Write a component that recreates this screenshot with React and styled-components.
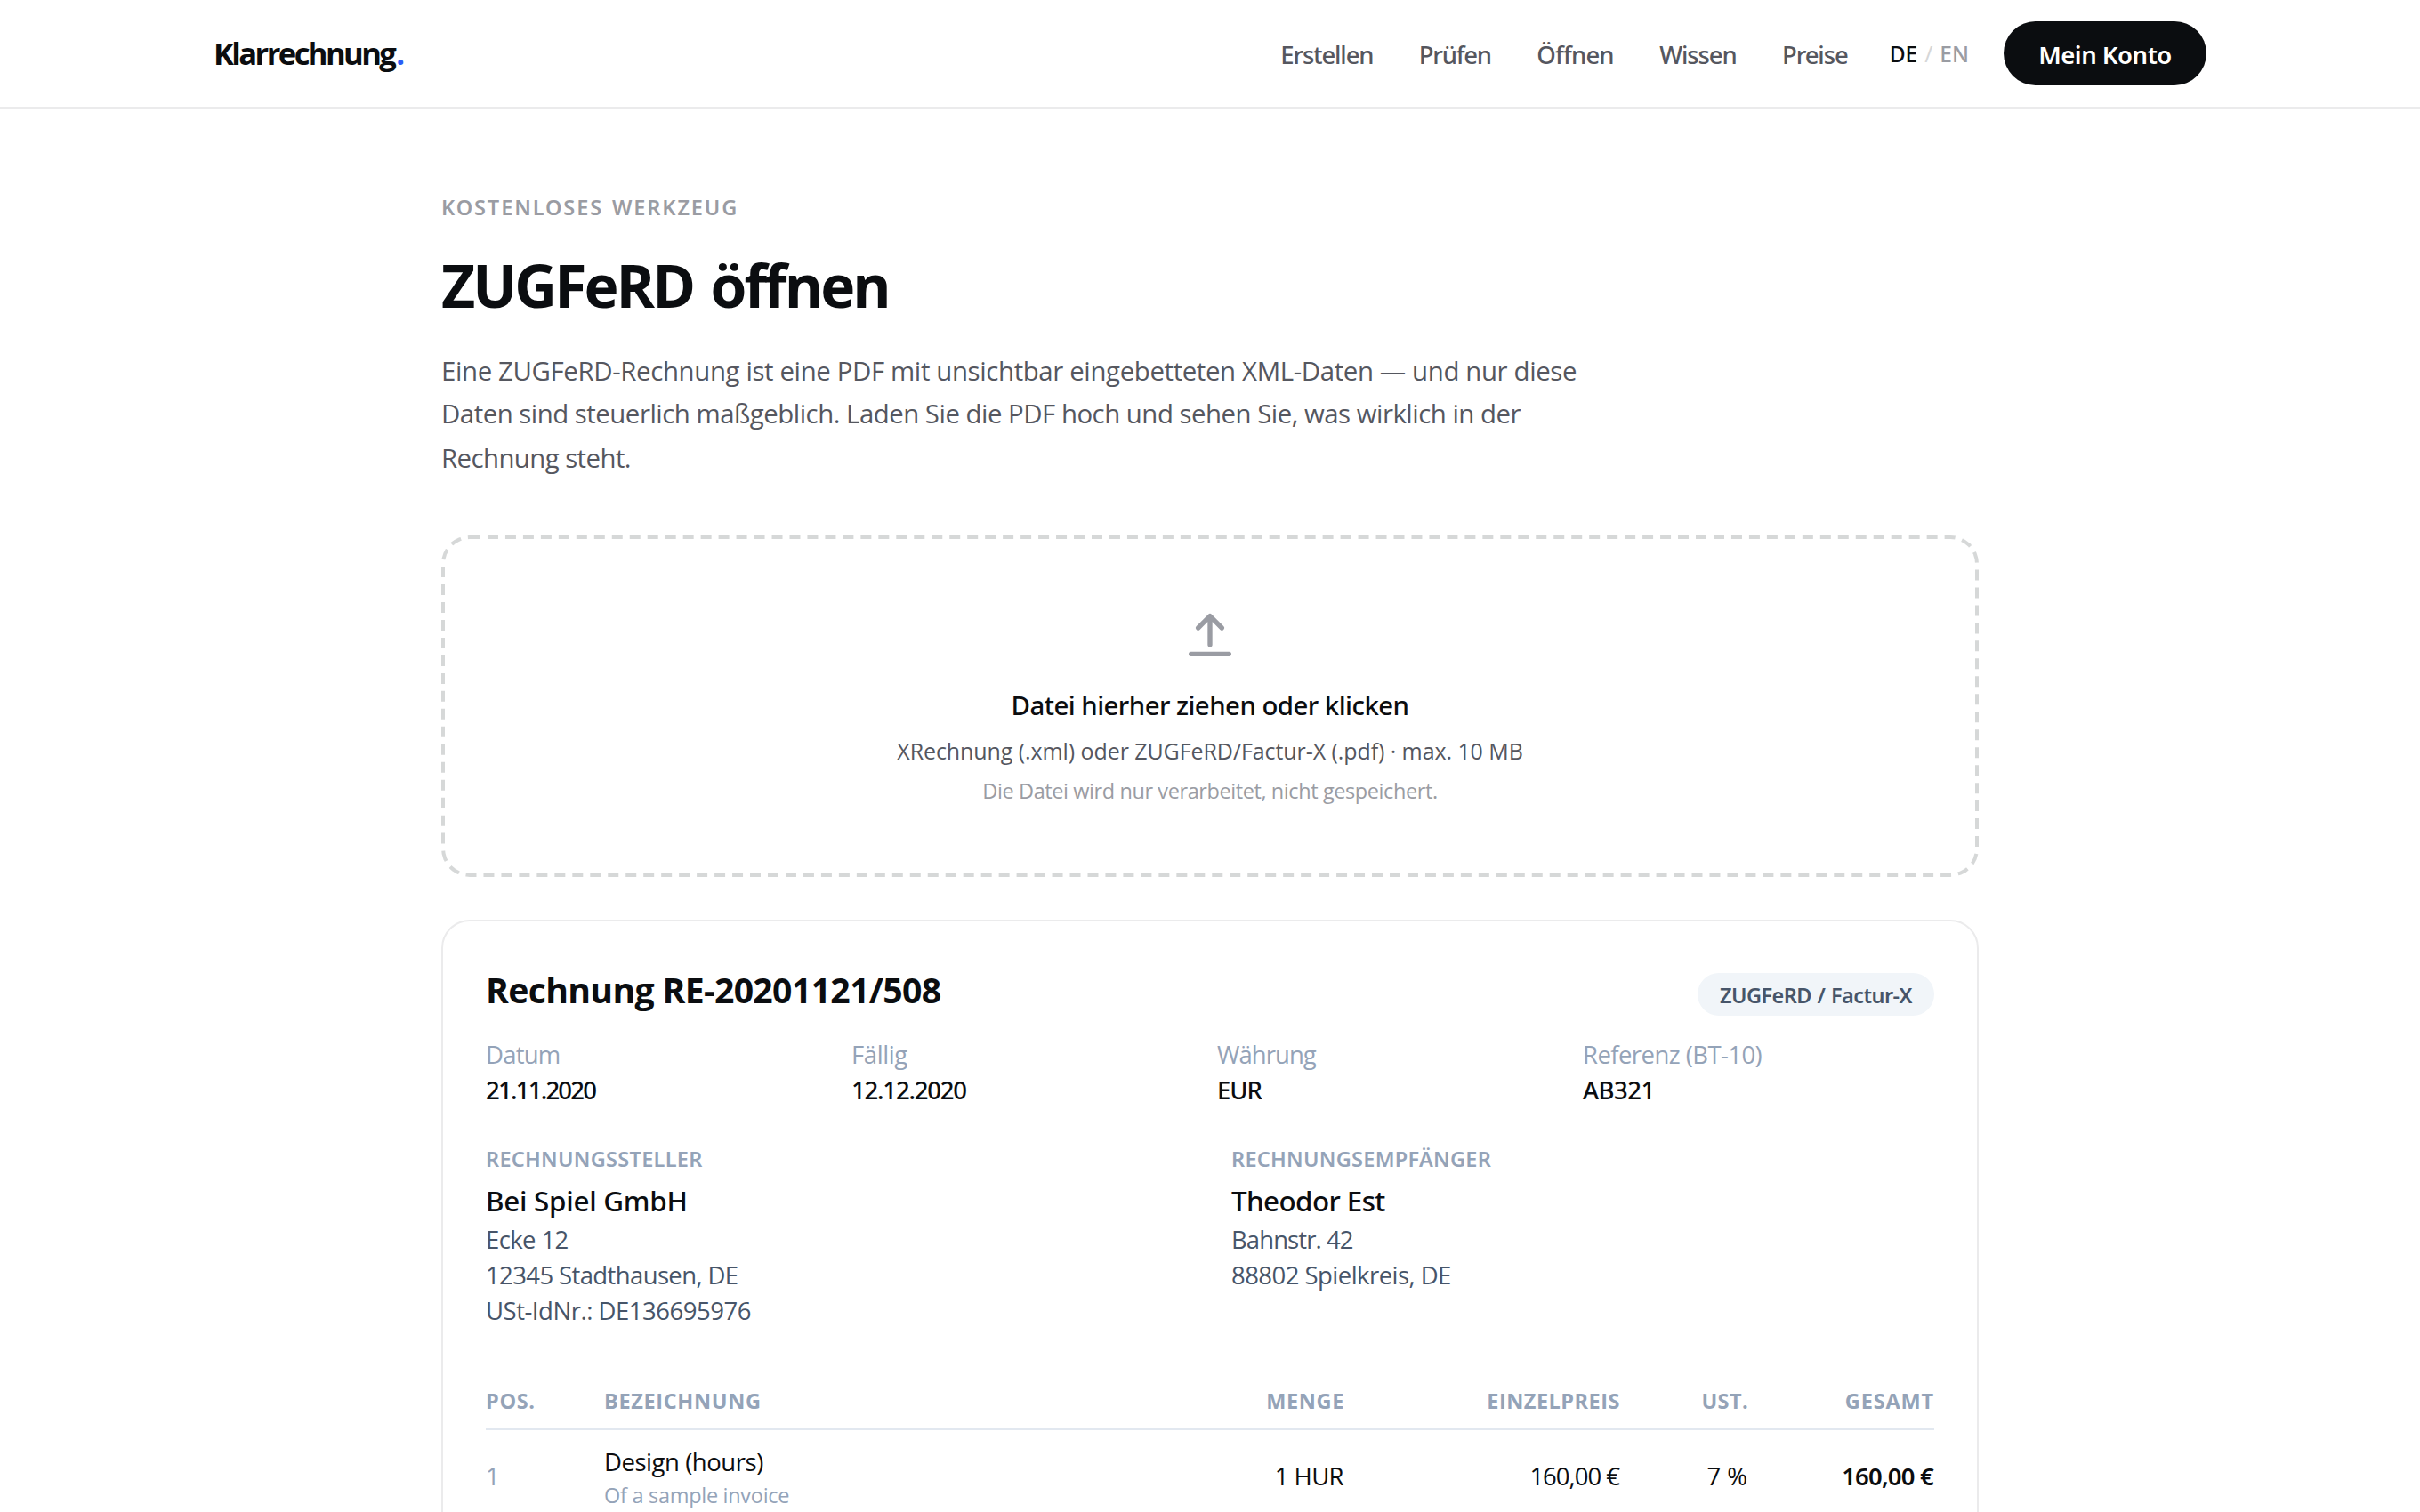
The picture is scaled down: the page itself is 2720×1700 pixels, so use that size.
import React from "react";
import styled, { createGlobalStyle } from "styled-components";

const BODY_FONT = '"Open Sans", "Noto Sans", sans-serif';
const MEDIUM_FONT = '"Noto Sans", "Open Sans", sans-serif';

const ink = "#0b0d10";
const grey = "#55575f";
const muted = "#9a9ca3";
const slate = "#94a3b8";
const slateDark = "#475569";

const Global = createGlobalStyle`
  *, *::before { box-sizing: border-box; }
  body { margin: 0; background: #fff; }
  h1, h2, p { margin: 0; }
`;

const Page = styled.div`
  width: 100%;
  height: 1700px;
  overflow: hidden;
  background: #fff;
  color: ${ink};
  font-family: ${BODY_FONT};
  font-size: 27.5px;
  white-space: nowrap;
`;

const Header = styled.header`
  height: 122px;
  border-bottom: 2px solid #ebebec;
`;

const HeaderInner = styled.div`
  width: 2240px;
  height: 120px;
  margin: 0 auto;
  display: flex;
  align-items: center;
  justify-content: space-between;
`;

const Logo = styled.div`
  padding-bottom: 2px;
  font-size: 34.6px;
  font-weight: 700;
  letter-spacing: -2.6px;
`;

const Dot = styled.span`
  margin-left: 2px;
  color: #2b5cf6;
`;

const Nav = styled.nav`
  display: flex;
  align-items: center;
`;

const Links = styled.div`
  display: flex;
  gap: 51.5px;
  margin-right: 47px;
  padding-top: 3px;
`;

const NavLink = styled.a`
  color: ${grey};
  font-family: ${MEDIUM_FONT};
  font-weight: 500;
  letter-spacing: ${(p) => p.$k}px;
`;

const Langs = styled.div`
  display: flex;
  gap: 8px;
  margin-right: 39px;
  padding-top: 1px;
  font-size: 24.5px;
  font-family: ${MEDIUM_FONT};
  font-weight: 500;
`;

const Lang = styled.span`
  color: ${(p) => (p.$active ? ink : muted)};
`;

const LangSlash = styled.span`
  color: #d6d7d8;
  font-weight: 400;
`;

const AccountButton = styled.button`
  width: 228px;
  height: 72px;
  padding: 3px 0 0;
  border: 0;
  border-radius: 36px;
  background: ${ink};
  color: #fff;
  font: 600 27.5px ${MEDIUM_FONT};
  letter-spacing: -0.5px;
`;

const Main = styled.main`
  width: 1728px;
  margin: 0 auto;
  padding-top: 93px;
`;

const Eyebrow = styled.p`
  color: ${muted};
  font: 600 23.5px/36px ${MEDIUM_FONT};
  letter-spacing: 1.9px;
  word-spacing: 2px;
`;

const Title = styled.h1`
  margin-top: 32px;
  font-size: 66px;
  line-height: 74px;
  font-weight: 700;
  letter-spacing: -2.9px;
  word-spacing: 5px;
`;

const Lead = styled.p`
  margin-top: 36px;
  color: ${grey};
  font-size: 29.4px;
`;

const Line = styled.span`
  display: block;
  line-height: ${(p) => p.$h}px;
  letter-spacing: ${(p) => p.$k}px;
`;

const DropZone = styled.section`
  position: relative;
  height: 384px;
  margin-top: 61px;
  padding-top: 80px;
  display: flex;
  flex-direction: column;
  align-items: center;

  &::before {
    content: "";
    position: absolute;
    top: 0;
    left: 0;
    width: 50%;
    height: 50%;
    border: 2px dashed #d6d8d8;
    border-radius: 16px;
    transform: scale(2);
    transform-origin: 0 0;
  }
`;

const DropTitle = styled.p`
  margin-top: 25px;
  font: 500 29.4px/44px ${MEDIUM_FONT};
  letter-spacing: -0.54px;
`;

const DropFormats = styled.p`
  margin-top: 10px;
  color: ${grey};
  font-size: 25px;
  line-height: 38px;
  letter-spacing: -0.08px;
`;

const DropNote = styled.p`
  margin-top: 8px;
  color: ${muted};
  font-size: 23.5px;
  line-height: 36px;
  letter-spacing: -0.41px;
`;

const Card = styled.section`
  margin-top: 48px;
  padding: 48px;
  border: 2px solid #ebebec;
  border-radius: 32px;
`;

const CardHead = styled.div`
  display: flex;
  align-items: flex-start;
  justify-content: space-between;
  height: 58px;
`;

const CardTitle = styled.h2`
  margin-top: 1px;
  font-size: 39.2px;
  line-height: 56px;
  font-weight: 700;
  letter-spacing: -0.67px;
`;

const Badge = styled.span`
  width: 266px;
  height: 48px;
  margin-top: 10px;
  padding-top: 2px;
  border-radius: 24px;
  background: #f1f5f9;
  color: ${slateDark};
  font: 600 23.5px/46px ${MEDIUM_FONT};
  letter-spacing: -0.55px;
  word-spacing: 1px;
  text-align: center;
`;

const Meta = styled.div`
  display: grid;
  grid-template-columns: repeat(4, 1fr);
  gap: 16px;
  margin-top: 24px;
  line-height: 40px;
`;

const MetaLabel = styled.div`
  color: ${slate};
  letter-spacing: ${(p) => p.$k}px;
`;

const MetaValue = styled.div`
  font-family: ${MEDIUM_FONT};
  font-weight: 500;
  letter-spacing: ${(p) => p.$k}px;
`;

const Parties = styled.div`
  display: grid;
  grid-template-columns: 1fr 1fr;
  gap: 48px;
  margin-top: 41px;
`;

const PartyRole = styled.div`
  color: ${slate};
  font: 600 23.5px/32px ${MEDIUM_FONT};
  letter-spacing: 0.28px;
`;

const PartyName = styled.div`
  margin-top: 7px;
  font: 500 31.4px/48px ${MEDIUM_FONT};
  letter-spacing: ${(p) => p.$k}px;
`;

const PartyLine = styled.div`
  color: ${slateDark};
  line-height: 40px;
  letter-spacing: ${(p) => p.$k}px;
`;

const Table = styled.div`
  margin-top: 65px;
`;

const Row = styled.div`
  display: grid;
  grid-template-columns: 133px 700px 132px 310px 144px 209px;
  align-items: center;
  border-bottom: 2px solid ${(p) => (p.$head ? "#e2e8f0" : "#f1f5f9")};
  padding: ${(p) => (p.$head ? "0 0 15px" : "16px 0")};
`;

const Head = styled.div`
  color: ${slate};
  font-size: 23.5px;
  font-weight: 700;
  line-height: 32px;
  letter-spacing: ${(p) => p.$k ?? 0.65}px;
  text-align: ${(p) => (p.$end ? "right" : "left")};
`;

const Cell = styled.div`
  padding-right: ${(p) => (p.$end ? 1 : 0)}px;
  color: ${(p) => (p.$soft ? slate : ink)};
  line-height: 40px;
  letter-spacing: ${(p) => p.$k ?? -0.46}px;
  text-align: ${(p) => (p.$end ? "right" : "left")};
`;

const Total = styled(Cell)`
  font-family: ${MEDIUM_FONT};
  font-weight: 600;
`;

const ItemNote = styled.div`
  margin: 1px 0 -1px;
  color: ${slate};
  font-size: 23.5px;
  line-height: 32px;
  letter-spacing: -0.29px;
`;

const links = [
  ["Erstellen", -1.16],
  ["Prüfen", -1.25],
  ["Öffnen", -0.84],
  ["Wissen", -1.14],
  ["Preise", -1.1],
];

const meta = [
  { label: "Datum", lk: -0.8, value: "21.11.2020", vk: -1.75 },
  { label: "Fällig", lk: -0.42, value: "12.12.2020", vk: -1.19 },
  { label: "Währung", lk: -0.95, value: "EUR", vk: -1 },
  { label: "Referenz (BT-10)", lk: -0.56, value: "AB321", vk: -0.5 },
];

const parties = [
  {
    role: "RECHNUNGSSTELLER",
    name: "Bei Spiel GmbH",
    k: -0.28,
    lines: [["Ecke 12", -0.6], ["12345 Stadthausen, DE", -0.62], ["USt-IdNr.: DE136695976", -0.48]],
  },
  {
    role: "RECHNUNGSEMPFÄNGER",
    name: "Theodor Est",
    k: -0.6,
    lines: [["Bahnstr. 42", -0.92], ["88802 Spielkreis, DE", -0.54]],
  },
];

export default function App() {
  return (
    <Page>
      <Global />
      <Header>
        <HeaderInner>
          <Logo>Klarrechnung<Dot>.</Dot></Logo>
          <Nav>
            <Links>
              {links.map(([t, k]) => (
                <NavLink key={t} $k={k}>{t}</NavLink>
              ))}
            </Links>
            <Langs>
              <Lang $active>DE</Lang>
              <LangSlash>/</LangSlash>
              <Lang>EN</Lang>
            </Langs>
            <AccountButton>Mein Konto</AccountButton>
          </Nav>
        </HeaderInner>
      </Header>
      <Main>
        <Eyebrow>KOSTENLOSES WERKZEUG</Eyebrow>
        <Title>ZUGFeRD öffnen</Title>
        <Lead>
          <Line $h={48} $k={-0.37}>Eine ZUGFeRD-Rechnung ist eine PDF mit unsichtbar eingebetteten XML-Daten — und nur diese</Line>
          <Line $h={49} $k={-0.5}>Daten sind steuerlich maßgeblich. Laden Sie die PDF hoch und sehen Sie, was wirklich in der</Line>
          <Line $h={51} $k={-0.58}>Rechnung steht.</Line>
        </Lead>
        <DropZone>
          <svg width="64" height="64" viewBox="0 0 24 24" fill="none" stroke={muted} strokeWidth="2" strokeLinecap="round" strokeLinejoin="round">
            <path d="M12 16V4M7 9l5-5 5 5M4 20h16" />
          </svg>
          <DropTitle>Datei hierher ziehen oder klicken</DropTitle>
          <DropFormats>XRechnung (.xml) oder ZUGFeRD/Factur-X (.pdf) · max. 10 MB</DropFormats>
          <DropNote>Die Datei wird nur verarbeitet, nicht gespeichert.</DropNote>
        </DropZone>
        <Card>
          <CardHead>
            <CardTitle>Rechnung RE-20201121/508</CardTitle>
            <Badge>ZUGFeRD / Factur-X</Badge>
          </CardHead>
          <Meta>
            {meta.map((m) => (
              <div key={m.label}>
                <MetaLabel $k={m.lk}>{m.label}</MetaLabel>
                <MetaValue $k={m.vk}>{m.value}</MetaValue>
              </div>
            ))}
          </Meta>
          <Parties>
            {parties.map((p) => (
              <div key={p.role}>
                <PartyRole>{p.role}</PartyRole>
                <PartyName $k={p.k}>{p.name}</PartyName>
                {p.lines.map(([l, k]) => (
                  <PartyLine key={l} $k={k}>{l}</PartyLine>
                ))}
              </div>
            ))}
          </Parties>
          <Table>
            <Row $head>
              <Head>POS.</Head>
              <Head>BEZEICHNUNG</Head>
              <Head $end>MENGE</Head>
              <Head $end $k={0.5}>EINZELPREIS</Head>
              <Head $end $k={0.4}>UST.</Head>
              <Head $end $k={0.85}>GESAMT</Head>
            </Row>
            <Row>
              <Cell $soft>1</Cell>
              <div>
                <Cell>Design (hours)</Cell>
                <ItemNote>Of a sample invoice</ItemNote>
              </div>
              <Cell $end $k={-0.6}>1 HUR</Cell>
              <Cell $end $k={-1}>160,00 €</Cell>
              <Cell $end $k={0}>7 %</Cell>
              <Total $end $k={-0.8}>160,00 €</Total>
            </Row>
          </Table>
        </Card>
      </Main>
    </Page>
  );
}
